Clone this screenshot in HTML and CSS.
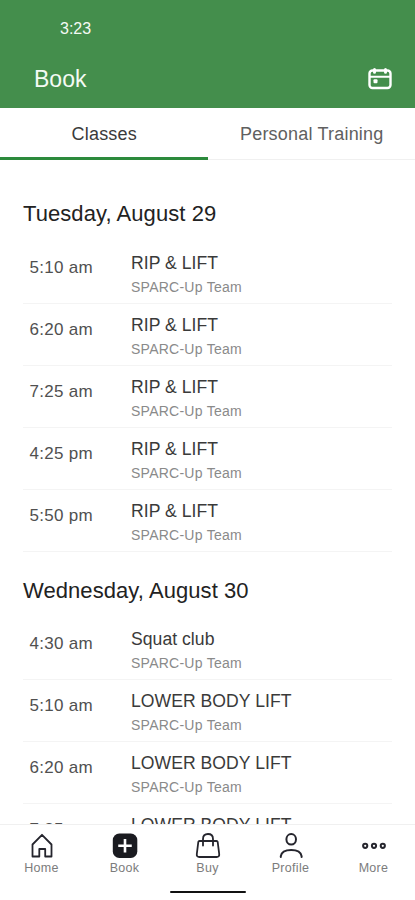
FILE: index.html
```html
<!DOCTYPE html>
<html lang="en">

<head>
    <meta charset="UTF-8">
    <meta name="viewport" content="width=device-width, initial-scale=1.0">
    <title>Book</title>
    <link rel="stylesheet" href="styles.css">
</head>

<body>
    <div class="app">
        <!-- header -->
        <header class="header">
            <div class="clock">3:23</div>
            <div class="titlebar">
                <h1 class="title">Book</h1>
                <svg class="calendar" width="26" height="24" viewBox="0 0 26 24" fill="none" stroke="#fff" stroke-width="2.4" stroke-linecap="round">
                    <rect x="2.5" y="3.5" width="21" height="17.5" rx="3" />
                    <path d="M3 9.700h20" stroke-width="2" />
                    <path d="M7.500 2.500v2.800M18.500 2.500v2.800" stroke-width="3" />
                    <rect x="6.500" y="12.200" width="4" height="4" rx="1" fill="#fff" stroke="none" />
                </svg>
            </div>
        </header>

        <!-- tabs -->
        <div class="tabs">
            <div class="tab active">Classes</div>
            <div class="tab">Personal Training</div>
        </div>

        <!-- class list -->
        <main class="list">
            <h2 class="day">Tuesday, August 29</h2>
            <div class="row">
                <div class="time">5:10 am</div>
                <div class="info">
                    <div class="name">RIP &amp; LIFT</div>
                    <div class="team">SPARC-Up Team</div>
                </div>
            </div>
            <div class="row">
                <div class="time">6:20 am</div>
                <div class="info">
                    <div class="name">RIP &amp; LIFT</div>
                    <div class="team">SPARC-Up Team</div>
                </div>
            </div>
            <div class="row">
                <div class="time">7:25 am</div>
                <div class="info">
                    <div class="name">RIP &amp; LIFT</div>
                    <div class="team">SPARC-Up Team</div>
                </div>
            </div>
            <div class="row">
                <div class="time">4:25 pm</div>
                <div class="info">
                    <div class="name">RIP &amp; LIFT</div>
                    <div class="team">SPARC-Up Team</div>
                </div>
            </div>
            <div class="row">
                <div class="time">5:50 pm</div>
                <div class="info">
                    <div class="name">RIP &amp; LIFT</div>
                    <div class="team">SPARC-Up Team</div>
                </div>
            </div>

            <h2 class="day next">Wednesday, August 30</h2>
            <div class="row">
                <div class="time">4:30 am</div>
                <div class="info">
                    <div class="name">Squat club</div>
                    <div class="team">SPARC-Up Team</div>
                </div>
            </div>
            <div class="row">
                <div class="time">5:10 am</div>
                <div class="info">
                    <div class="name">LOWER BODY LIFT</div>
                    <div class="team">SPARC-Up Team</div>
                </div>
            </div>
            <div class="row">
                <div class="time">6:20 am</div>
                <div class="info">
                    <div class="name">LOWER BODY LIFT</div>
                    <div class="team">SPARC-Up Team</div>
                </div>
            </div>
            <!-- runs under the bottom navigation -->
            <div class="row">
                <div class="time">7:25 am</div>
                <div class="info">
                    <div class="name">LOWER BODY LIFT</div>
                </div>
            </div>
        </main>

        <!-- bottom navigation -->
        <nav class="nav">
            <div class="item">
                <svg width="28" height="28" viewBox="0 0 28 28" fill="none" stroke="#25252d" stroke-width="1.8" stroke-linejoin="round">
                    <path d="M4.500 12.500L14 2.800l9.500 9.700v12h-6.300v-7.500h-5.900v7.500H4.500z" />
                </svg>
                <span>Home</span>
            </div>
            <div class="item">
                <svg width="28" height="28" viewBox="0 0 28 28">
                    <rect x="1.800" y="1.500" width="24.500" height="24.500" rx="6.500" fill="#1a1b20" />
                    <path d="M14 7v13.500M7.250 13.750h13.500" stroke="#fff" stroke-width="2.600" />
                </svg>
                <span>Book</span>
            </div>
            <div class="item">
                <svg width="28" height="28" viewBox="0 0 28 28" fill="none" stroke="#25252d" stroke-width="1.8" stroke-linecap="round" stroke-linejoin="round">
                    <path d="M5.500 9h17q1 0 1.200 1l1.500 12q.3 3-2.500 3H5.300q-2.800 0-2.500-3l1.500-12q.2-1 1.200-1z" />
                    <path d="M9 13.500V7q0-5 5-5t5 5v6.500" />
                </svg>
                <span>Buy</span>
            </div>
            <div class="item">
                <svg width="28" height="28" viewBox="0 0 28 28" fill="none" stroke="#25252d" stroke-width="2" stroke-linecap="round">
                    <ellipse cx="14.200" cy="7.300" rx="4.800" ry="5.300" />
                    <path d="M3.800 25v-.8q1-6.200 10.400-6.200t10.400 6.200v.8" />
                </svg>
                <span>Profile</span>
            </div>
            <div class="item">
                <svg width="28" height="28" viewBox="0 0 28 28" fill="none" stroke="#25252d" stroke-width="2">
                    <circle cx="5.200" cy="13.800" r="2.100" />
                    <circle cx="14" cy="13.800" r="2.100" />
                    <circle cx="22.800" cy="13.800" r="2.100" />
                </svg>
                <span>More</span>
            </div>
        </nav>
        <div class="home-bar"></div>
    </div>
</body>

</html>
```
FILE: styles.css
```css
* {
    box-sizing: border-box;
}

body {
    margin: 0;
    background-color: #fff;
    font-family: "Liberation Sans", Arial, sans-serif;
    color: #2b2b2b;
}

.app {
    display: flex;
    flex-direction: column;
    height: 900px;
    overflow: hidden;
}

.header {
    flex: none;
    height: 108px;
    background-color: #448e4c;
    color: #f4faf4;
}

.clock {
    height: 50px;
    padding: 19px 0 0 60px;
    font-size: 16px;
    line-height: 20px;
}

.titlebar {
    display: flex;
    align-items: center;
    justify-content: space-between;
    height: 58px;
    padding: 0 22px 0 34px;
}

.title {
    margin: 0;
    font-size: 23px;
    font-weight: 400;
    line-height: 28px;
}

.tabs {
    display: flex;
    flex: none;
    height: 52px;
}

.tab {
    flex: 1;
    padding: 14px 0 0 1px;
    font-size: 18px;
    line-height: 24px;
    letter-spacing: 0.2px;
    text-align: center;
    color: #606060;
    border-bottom: 1px solid #f0f0f0;
}

.tab.active {
    color: #3a3a3a;
    border-bottom: 3px solid #2c8a3c;
}

.list {
    flex: 1;
    min-height: 0;
    padding: 14px 23px 0;
    overflow: hidden;
}

.day {
    height: 68px;
    margin: 0;
    padding-top: 26px;
    font-size: 22px;
    font-weight: 400;
    line-height: 28px;
    letter-spacing: 0.07px;
    color: #222;
}

.day.next {
    height: 66px;
    padding-top: 25px;
}

.row {
    display: flex;
    height: 62px;
    border-bottom: 1px solid #f4f4f4;
}

.time {
    width: 108px;
    padding: 16px 0 0 6.5px;
    font-size: 17px;
    line-height: 20px;
    letter-spacing: 0.3px;
    color: #505050;
}

.info {
    padding-top: 10px;
}

.name {
    font-size: 17.6px;
    line-height: 22px;
    letter-spacing: 0.03px;
    color: #3a3a3a;
}

.team {
    margin-top: 4px;
    font-size: 14px;
    line-height: 18px;
    letter-spacing: 0.25px;
    color: #8a8a8a;
}

.nav {
    display: flex;
    flex: none;
    height: 67px;
    border-top: 1px solid #f0f0f0;
}

.item {
    display: flex;
    flex: 1;
    flex-direction: column;
    align-items: center;
    padding-top: 7px;
    font-size: 12.5px;
    line-height: 16px;
    letter-spacing: 0.3px;
    color: #7c7c7c;
}

.home-bar {
    flex: none;
    width: 76px;
    height: 2px;
    margin: 0 auto 7px;
    border-radius: 1px;
    background-color: #111;
}
```
